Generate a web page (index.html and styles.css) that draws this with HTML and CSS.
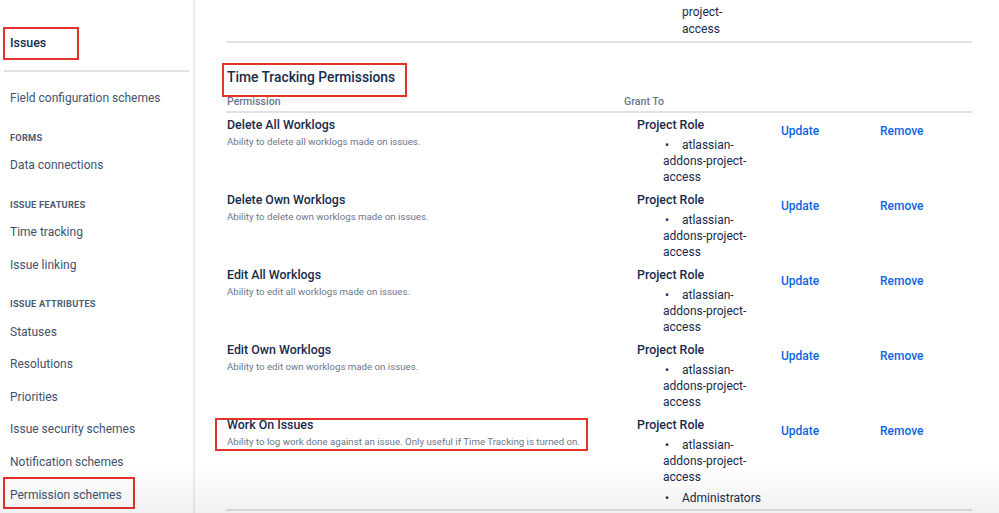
FILE: index.html
```html
<!DOCTYPE html>
<html lang="en">
<head>
<meta charset="utf-8">
<title>Permission scheme</title>
<link rel="stylesheet" href="styles.css">
</head>
<body>
<div class="page">
  <aside class="sidebar">
    <div class="side-head"><span class="side-title mark-issues">Issues</span></div>
    <nav class="side-nav">
      <a class="side-item">Field configuration schemes</a>
      <div class="side-section">FORMS</div>
      <a class="side-item">Data connections</a>
      <div class="side-section">ISSUE FEATURES</div>
      <a class="side-item">Time tracking</a>
      <a class="side-item">Issue linking</a>
      <div class="side-section">ISSUE ATTRIBUTES</div>
      <a class="side-item">Statuses</a>
      <a class="side-item">Resolutions</a>
      <a class="side-item">Priorities</a>
      <a class="side-item">Issue security schemes</a>
      <a class="side-item">Notification schemes</a>
      <a class="side-item mark-perm">Permission schemes</a>
    </nav>
  </aside>
  <main class="main">
    <div class="prev-row">
      <div class="prev-spacer"></div>
      <div class="prev-lines">
        <div>addons-</div>
        <div>project-</div>
        <div>access</div>
      </div>
    </div>

    <h2 class="section-title"><span class="mark-heading">Time Tracking Permissions</span></h2>

    <div class="table">
      <div class="thead">
        <div>Permission</div>
        <div>Grant To</div>
      </div>

      <div class="row">
        <div class="perm">
          <div class="perm-name">Delete All Worklogs</div>
          <div class="perm-desc">Ability to delete all worklogs made on issues.</div>
        </div>
        <div class="grant">
          <div class="grant-type">Project Role</div>
          <ul class="grant-list"><li>atlassian-addons-project-access</li></ul>
        </div>
        <div class="op"><a>Update</a></div>
        <div class="op"><a>Remove</a></div>
      </div>

      <div class="row">
        <div class="perm">
          <div class="perm-name">Delete Own Worklogs</div>
          <div class="perm-desc">Ability to delete own worklogs made on issues.</div>
        </div>
        <div class="grant">
          <div class="grant-type">Project Role</div>
          <ul class="grant-list"><li>atlassian-addons-project-access</li></ul>
        </div>
        <div class="op"><a>Update</a></div>
        <div class="op"><a>Remove</a></div>
      </div>

      <div class="row">
        <div class="perm">
          <div class="perm-name">Edit All Worklogs</div>
          <div class="perm-desc">Ability to edit all worklogs made on issues.</div>
        </div>
        <div class="grant">
          <div class="grant-type">Project Role</div>
          <ul class="grant-list"><li>atlassian-addons-project-access</li></ul>
        </div>
        <div class="op"><a>Update</a></div>
        <div class="op"><a>Remove</a></div>
      </div>

      <div class="row">
        <div class="perm">
          <div class="perm-name">Edit Own Worklogs</div>
          <div class="perm-desc">Ability to edit own worklogs made on issues.</div>
        </div>
        <div class="grant">
          <div class="grant-type">Project Role</div>
          <ul class="grant-list"><li>atlassian-addons-project-access</li></ul>
        </div>
        <div class="op"><a>Update</a></div>
        <div class="op"><a>Remove</a></div>
      </div>

      <div class="row">
        <div class="perm mark-work">
          <div class="perm-name">Work On Issues</div>
          <div class="perm-desc">Ability to log work done against an issue. Only useful if Time Tracking is turned on.</div>
        </div>
        <div class="grant">
          <div class="grant-type">Project Role</div>
          <ul class="grant-list">
            <li>atlassian-addons-project-access</li>
            <li>Administrators</li>
          </ul>
        </div>
        <div class="op"><a>Update</a></div>
        <div class="op"><a>Remove</a></div>
      </div>
    </div>
  </main>
</div>
</body>
</html>
```
FILE: styles.css
```css
html, body {
  margin: 0;
  padding: 0;
  background: #ffffff;
}
body {
  font-family: Roboto, "Liberation Sans", Arial, sans-serif;
  color: #172b4d;
  height: 513px;
  overflow: hidden;
  position: relative;
}
body::after {
  content: "";
  position: fixed;
  left: 0;
  right: 0;
  bottom: 0;
  height: 50px;
  background: linear-gradient(to bottom, rgba(0,0,0,0), rgba(0,0,0,0.055));
  pointer-events: none;
}
.page {
  display: flex;
  height: 513px;
}

/* Sidebar */
.sidebar {
  width: 185px;
  flex: 0 0 185px;
  padding: 0 4px;
  border-right: 2px solid #ebecf0;
}
.side-head {
  padding: 34px 6px 19px;
  border-bottom: 2px solid #dfe1e6;
  line-height: 16px;
}
.side-title {
  position: relative;
  font-weight: 500;
  font-size: 12.4px;
  color: #172b4d;
}
.side-nav {
  margin-top: 10px;
  display: flex;
  flex-direction: column;
}
.side-item {
  display: block;
  height: 32.6px;
  line-height: 32.6px;
  padding-left: 6px;
  font-size: 12px;
  color: #42526e;
  position: relative;
}
.side-section {
  margin-top: 11px;
  height: 23.4px;
  line-height: 23.4px;
  padding-left: 6px;
  font-size: 9.3px;
  font-weight: 700;
  color: #4d5b75;
  letter-spacing: 0.2px;
}

/* Red annotation boxes */
.mark-issues::after,
.mark-perm::after,
.mark-heading::after,
.mark-work::after {
  content: "";
  position: absolute;
  border: 2px solid #e5322d;
  box-sizing: border-box;
  pointer-events: none;
}
.mark-issues::after {
  left: -7px;
  top: -8px;
  width: 76px;
  height: 33px;
}
.mark-perm::after {
  left: -1px;
  top: -1.6px;
  width: 132px;
  height: 32px;
}
.mark-heading {
  position: relative;
}
.mark-heading::after {
  left: -5px;
  top: -6px;
  width: 185px;
  height: 34px;
}
.mark-work {
  position: relative;
}
.mark-work::after {
  left: -12px;
  top: 1px;
  width: 373px;
  height: 33px;
}

/* Main */
.main {
  flex: 1;
  padding: 0 27px 0 31px;
  min-width: 0;
}
.prev-row {
  height: 38px;
  padding-bottom: 3px;
  overflow: hidden;
  display: flex;
  align-items: flex-end;
  border-bottom: 2px solid #dfe1e6;
}
.prev-spacer {
  flex: 0 0 397px;
}
.prev-lines {
  padding-left: 59px;
  font-size: 12px;
  line-height: 17px;
  color: #172b4d;
}
.section-title {
  margin: 24px 0 0;
  padding-left: 1px;
  font-size: 13.8px;
  line-height: 20px;
  font-weight: 500;
  color: #172b4d;
}
.table {
  width: 746px;
}
.thead {
  margin-top: 8px;
  display: grid;
  grid-template-columns: 397px 1fr;
  font-size: 10.6px;
  line-height: 14px;
  font-weight: 500;
  color: #6b778c;
  padding: 0 0 2px 1px;
  border-bottom: 2px solid #dfe1e6;
}
.row {
  display: grid;
  grid-template-columns: 397px 157px 99px 1fr;
  padding: 4px 0 3px 1px;
}
.row:last-child {
  border-bottom: 2px solid #dfe1e6;
}
.perm-name {
  font-size: 12.4px;
  line-height: 16px;
  font-weight: 500;
  color: #172b4d;
}
.perm-desc {
  margin-top: 3px;
  font-size: 9.7px;
  line-height: 12px;
  color: #6b778c;
}
.grant {
  padding-left: 13px;
}
.grant-type {
  font-size: 12.4px;
  line-height: 16px;
  font-weight: 500;
  color: #172b4d;
}
.grant-list {
  list-style: none;
  margin: 4px 0 0;
  padding: 0 0 0 26px;
}
.grant-list li {
  width: 100px;
  font-size: 12px;
  line-height: 16px;
  color: #172b4d;
}
.grant-list li + li {
  margin-top: 5px;
}
.grant-list li::before {
  content: "\2022";
  display: inline-block;
  width: 17px;
  padding-left: 2px;
}
.op {
  padding-top: 3px;
}
.op a {
  font-size: 12px;
  line-height: 16px;
  font-weight: 500;
  color: #0c66e4;
  cursor: pointer;
}
```
